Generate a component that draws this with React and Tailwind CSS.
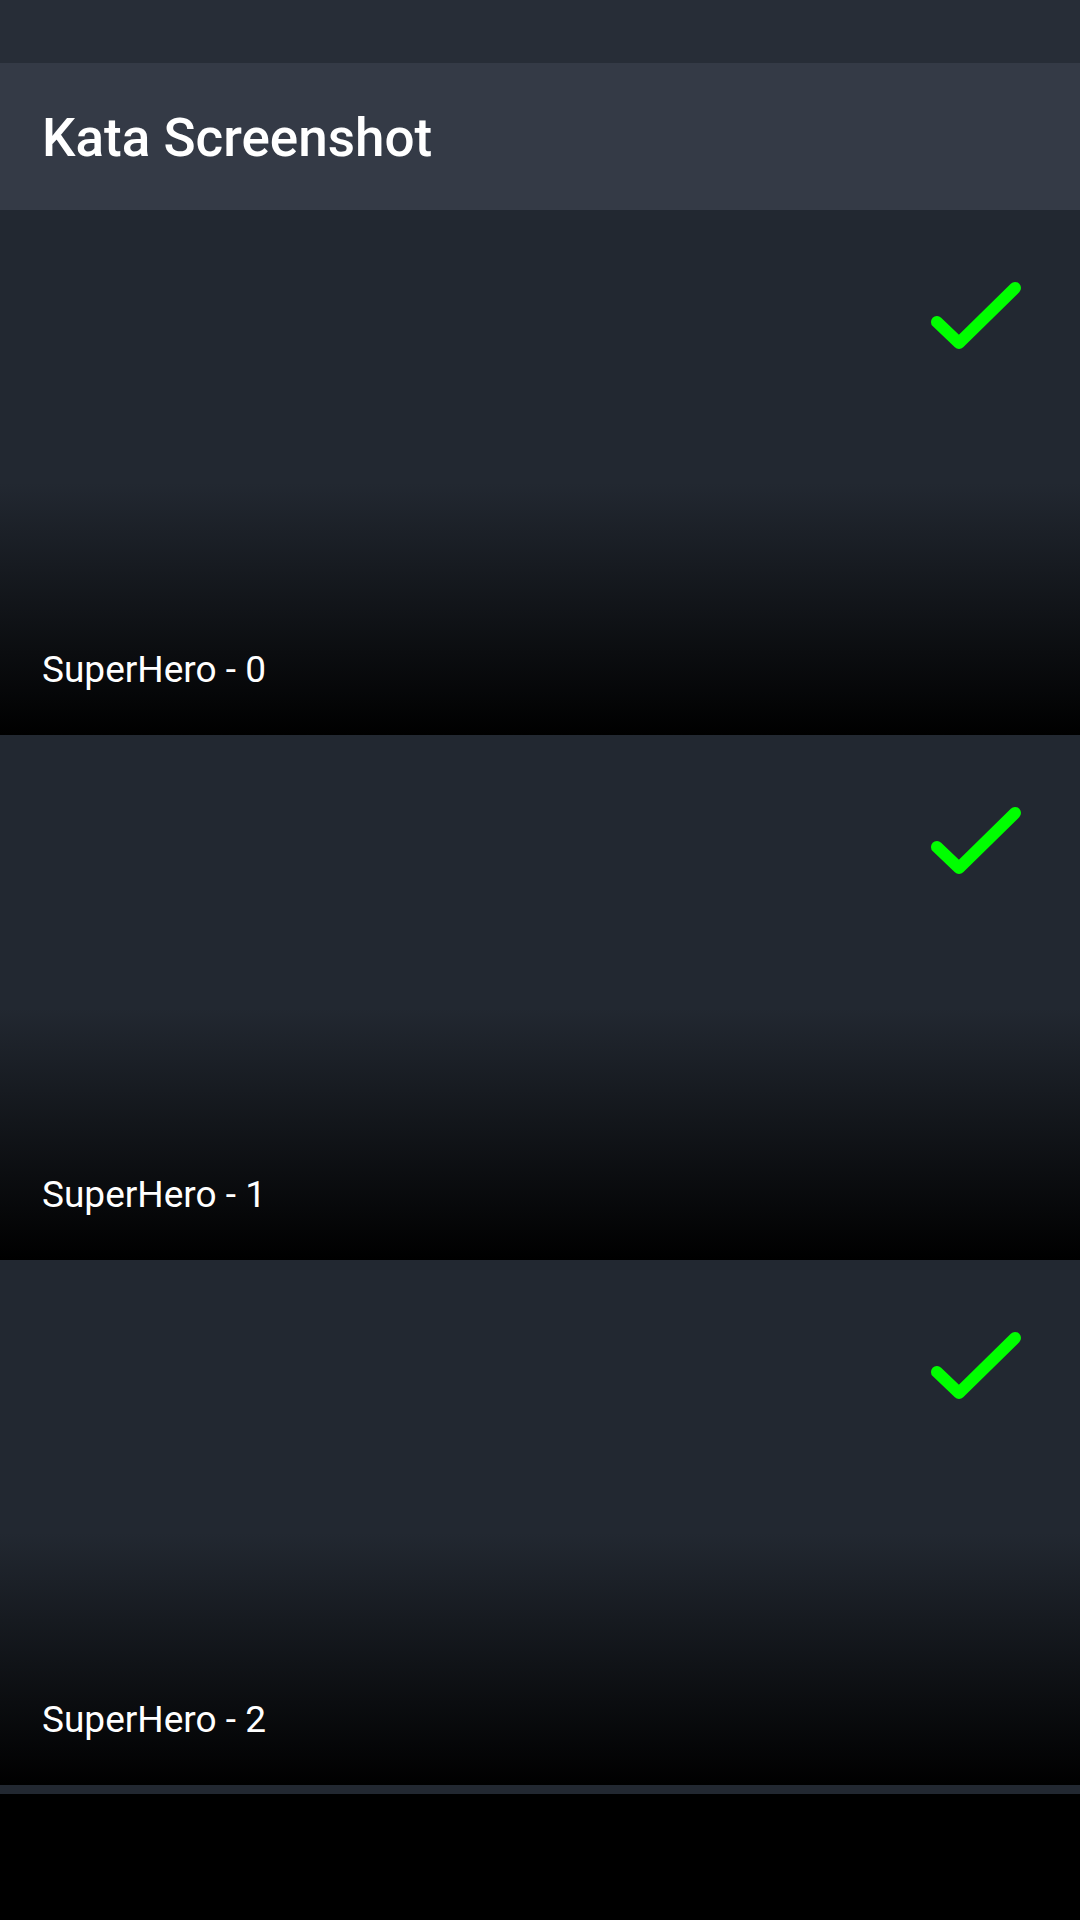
import React from "react";

function Check() {
  return (
    <svg width="96" height="72" viewBox="0 0 96 72" fill="none">
      <path d="M10 42 L32 63 L88 8" stroke="#00ff00" strokeWidth="12" strokeLinecap="round" strokeLinejoin="round" />
    </svg>
  );
}

function Item({ n }) {
  return (
    <div className="h-[525px] flex flex-col justify-between bg-[linear-gradient(to_bottom,#222831_52%,#000000_100%)]">
      <div className="flex justify-end pt-[70px] pr-[57px]">
        <Check />
      </div>
      <div className="px-[42px] pb-[47px] text-[37px] leading-none text-white">SuperHero - {n}</div>
    </div>
  );
}

export default function App() {
  return (
    <div className="w-[1080px] h-[1920px] bg-black flex flex-col" style={{ fontFamily: "Roboto, 'Noto Sans', sans-serif" }}>
      <div className="h-[63px] bg-[#272d37]" />
      <div className="h-[147px] bg-[#343a46] px-[42px] pt-[49px]">
        <div className="text-[53px] leading-none font-medium text-white">Kata Screenshot</div>
      </div>
      <Item n={0} />
      <Item n={1} />
      <Item n={2} />
      <div className="h-[9px] bg-[#222831]" />
    </div>
  );
}
